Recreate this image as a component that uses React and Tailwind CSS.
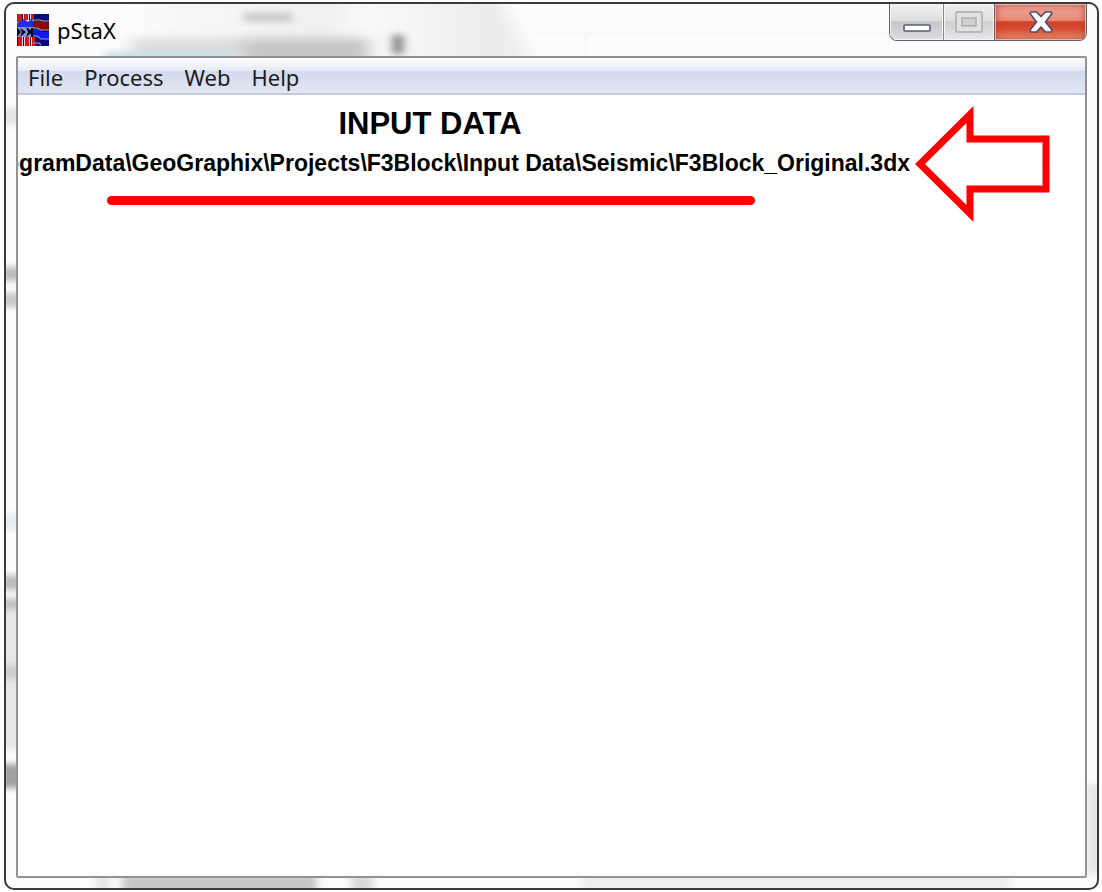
const menus = ['File', 'Process', 'Web', 'Help'];

function AppIcon() {
  return (
    <svg className="h-8 w-8 shrink-0" viewBox="0 0 32 32" aria-hidden="true">
      <rect width="32" height="32" fill="#0a0a78" />
      <rect width="17" height="32" fill="#d8d4ea" />
      <path d="M0 0h5v8H0zM7 0h4v6H7zM14 0h3v6h-3zM1 22h4v10H1zM8 22h4v10H8zM15 23h3v9h-3z" fill="#d81414" />
      <path d="M5 0h1v7H5zM12 0h1v6h-1zM6 22h1v10H6zM13 22h1v10h-1zM0 22h1v10H0z" fill="#181830" />
      <path d="M0 9l4-2 3-2 4 3 3-3 3 3v6l-3 1-3-2-4 2-3-2-4 2z" fill="#2030e8" />
      <path d="M0 13h17v10H0z" fill="#8c90d8" />
      <path d="M0 13l4 5-4 5zM3 14l6 4-6 5 2-5zM9 13l7 5-7 5 2-5zM14 14h3v9h-3z" fill="#050514" />
      <path d="M16 7h8l8 2v7h-7l-5-3h-4z" fill="#8c0808" />
      <path d="M16 15h5l5 3h6v7h-7l-5-3h-4z" fill="#1018f0" />
      <path d="M16 6h7l3 1h6M16 14h4l4 2h8M16 22h4l4 3h8M16 29h6l2 2" fill="none" stroke="#a8a0a8" strokeWidth="1.1" />
    </svg>
  );
}

function GlassTexture() {
  return (
    <svg className="pointer-events-none absolute inset-0 h-full w-full" aria-hidden="true">
      <defs>
        <filter id="haze" x="-20%" y="-150%" width="140%" height="400%">
          <feGaussianBlur stdDeviation="9 5" />
        </filter>
        <filter id="fine" x="-10%" y="-10%" width="120%" height="120%">
          <feGaussianBlur stdDeviation="4 3" />
        </filter>
        <linearGradient id="sheen" x1="0" x2="1">
          <stop offset="0" stopColor="#fcfcfc" />
          <stop offset="0.5" stopColor="#efefef" />
          <stop offset="0.6" stopColor="#fafafa" />
          <stop offset="0.9" stopColor="#ebebeb" />
          <stop offset="1" stopColor="#f1f1f1" />
        </linearGradient>
      </defs>
      <g filter="url(#haze)">
        <path d="M110 -10h380l40 70H110z" fill="url(#sheen)" />
        <path d="M125 34h240v20H125z" fill="#dcdcdc" />
        <path d="M238 34h125v26H238z" fill="#c6c6c6" />
      </g>
      <g filter="url(#fine)">
        <rect x="238" y="9" width="48" height="9" fill="#c8c8c8" />
        <rect x="98" y="48" width="128" height="9" fill="#c4dfe9" />
        <rect x="386" y="31" width="12" height="19" fill="#909090" />
        <rect x="-6" y="263" width="26" height="14" fill="#bcbcbc" />
        <rect x="-6" y="289" width="26" height="14" fill="#c6c6c6" />
        <rect x="-6" y="104" width="26" height="17" fill="#e4e4e4" />
        <rect x="-6" y="510" width="26" height="16" fill="#e3edf2" />
        <rect x="-6" y="571" width="26" height="15" fill="#bcbcbc" />
        <rect x="-6" y="594" width="26" height="12" fill="#c2c2c2" />
        <rect x="-6" y="606" width="26" height="140" fill="#e7e7e7" />
        <rect x="-6" y="661" width="26" height="14" fill="#cccccc" />
        <rect x="-6" y="760" width="26" height="24" fill="#a0a0a0" />
        <rect x="90" y="870" width="14" height="24" fill="#e4e4e4" />
        <rect x="116" y="870" width="195" height="24" fill="#c6c6c6" />
        <rect x="345" y="870" width="22" height="24" fill="#d8d8d8" />
        <rect x="575" y="870" width="430" height="24" fill="#eeeeee" />
        <rect x="1080" y="780" width="20" height="90" fill="#e6e6e6" />
      </g>
      <path d="M580 31v23M530 30h350" stroke="#f8f8f8" strokeWidth="4" />
    </svg>
  );
}

function WindowControls() {
  return (
    <div className="flex h-[37px] overflow-hidden rounded-b-lg border border-t-0 border-[#5f6066]">
      <button aria-label="Minimize" className="flex w-[54px] items-center justify-center border-r border-[#85858a] bg-[linear-gradient(#f0f0f0_0%,#dedede_45%,#c5c5c5_50%,#dcdfe6_100%)] shadow-[inset_0_0_0_1px_#f5f5f5]">
        <svg className="mt-3 h-2 w-7" viewBox="0 0 28 8" aria-hidden="true">
          <rect x="1" y="1" width="26" height="6" rx="1" fill="#fff" stroke="#5a5f70" strokeWidth="1.6" />
        </svg>
      </button>
      <button aria-label="Maximize" className="flex w-[51px] items-center justify-center border-r border-[#7b5556] bg-[linear-gradient(#ededed_0%,#dfdfdf_45%,#cfcfcf_50%,#e4e6ea_100%)] shadow-[inset_0_0_0_1px_#f5f5f5]">
        <svg className="h-[22px] w-7" viewBox="0 0 28 22" fill="none" stroke="#ababad" strokeWidth="1.4" aria-hidden="true">
          <rect x="1" y="1" width="26" height="20" rx="1" fill="#e2e2e2" />
          <rect x="7" y="7" width="14" height="8" fill="#d0d0d0" />
        </svg>
      </button>
      <button aria-label="Close" className="flex w-[91px] items-center justify-center bg-[linear-gradient(#f2aa9c_0%,#ea8b79_45%,#d0402a_50%,#d84c31_70%,#f0a080_100%)] shadow-[inset_0_0_0_1px_#efb1a2,inset_0_0_8px_#a8392f]">
        <svg className="h-[22px] w-6" viewBox="0 0 24 22" aria-hidden="true">
          <path d="M2 1h5.5l4.5 4.500 4.500-4.500h5.500l1 1.500-6.500 8.500 6.500 8-1 2h-5.500l-4.500-5-4.500 5H2l-1-2 6.500-8-6.500-8.500z" fill="#fafafa" stroke="#4c4f63" strokeWidth="1.6" strokeLinejoin="round" />
        </svg>
      </button>
    </div>
  );
}

export default function App() {
  return (
    <div className="h-screen bg-white pt-[2px] pr-[3px] pb-[2px] pl-1 font-['Noto_Sans',sans-serif] text-black">
      <div className="relative flex h-full flex-col overflow-hidden rounded-[10px] border-2 border-[#3a3a3c] bg-[#fcfcfc]">
        <GlassTexture />
        <header className="relative flex h-[52px] shrink-0 items-start justify-between pr-[10px] pl-[11px]">
          <div className="flex items-center gap-2 pt-[10px]">
            <AppIcon />
            <h1 className="text-[22px] leading-8">pStaX</h1>
          </div>
          <WindowControls />
        </header>
        <div className="relative mr-[10px] mb-[10px] ml-[10px] flex min-h-0 flex-1 flex-col overflow-hidden rounded-[2px] border-2 border-[#939192] bg-white">
          <nav className="flex h-[37px] shrink-0 items-center gap-[21px] border-b-2 border-[#c3c8dc] bg-[linear-gradient(#ffffff_0%,#e5eaf5_36%,#d3daed_38%,#e0e6f5_100%)] pt-[2px] pl-[10px]">
            {menus.map((m) => (
              <button key={m} className="text-[22px] leading-8 text-[#1c1c1c]">
                {m}
              </button>
            ))}
          </nav>
          <main className="flex-1 font-['Liberation_Sans',sans-serif] font-bold">
            <h2 className="w-[824px] pt-[11px] text-center text-[31px] leading-9">INPUT DATA</h2>
            <div className="relative mt-[5px] w-[892px]">
              <p className="flex justify-end overflow-hidden text-[23px] leading-8 whitespace-nowrap">
                ogramData\GeoGraphix\Projects\F3Block\Input Data\Seismic\F3Block_Original.3dx
              </p>
              <svg className="absolute top-[-42px] left-[897px] h-[118px] w-[136px]" viewBox="0 0 136 118" aria-hidden="true">
                <path d="M5 59L55 9.500v24.500h76v50H55v24.500z" fill="none" stroke="#f00" strokeWidth="7" strokeMiterlimit="10" />
              </svg>
            </div>
            <div className="mt-[17px] ml-[89px] h-[9px] w-[648px] rounded-full bg-[#ff0000]" />
          </main>
        </div>
      </div>
    </div>
  );
}
